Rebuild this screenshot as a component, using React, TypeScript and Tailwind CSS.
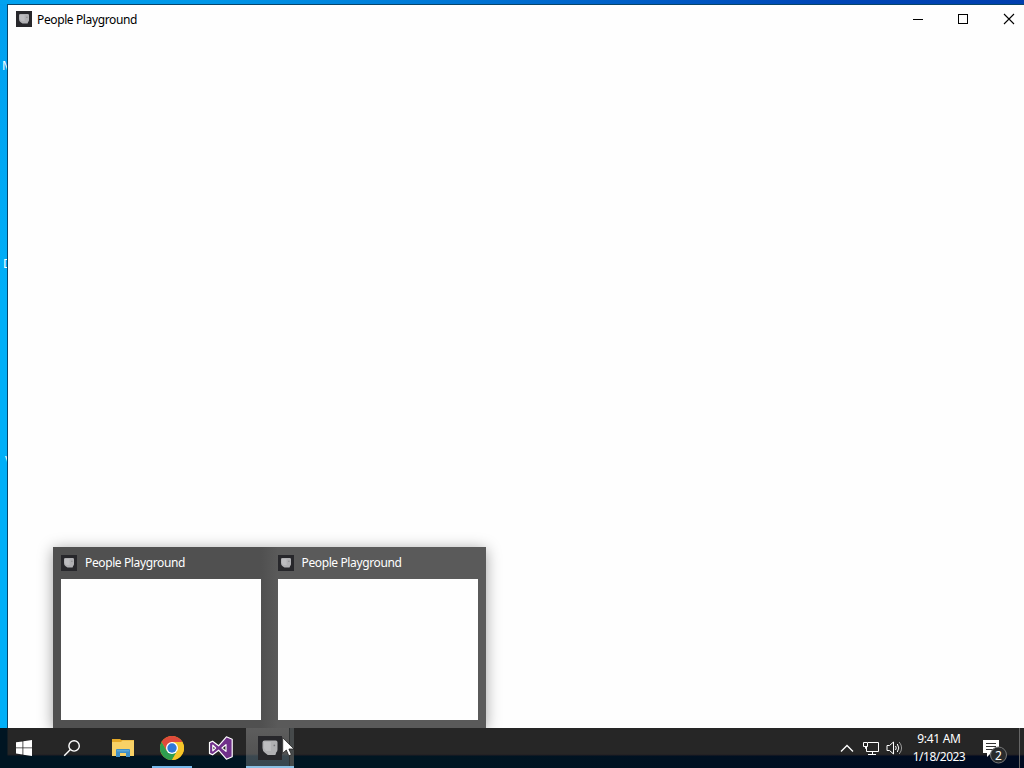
import type { ReactNode } from "react";

type TaskButtonProps = {
  children: ReactNode;
  label: string;
  className?: string;
};

function GameIcon({ size = 16, className = "" }: { size?: number; className?: string }) {
  return (
    <svg width={size} height={size} viewBox="0 0 16 16" className={`shrink-0 ${className}`}>
      <rect width="16" height="16" fill="#27272b" />
      <path
        d="M3 4.2Q3 3 4.4 3H11.8Q13 3 13 4.2V9Q13 10.4 12.2 10.8L11.6 12.6H6.5L4.6 11.2Q3 10.2 3 8Z"
        fill="#b0b0b3"
      />
      <path d="M4 4H8.6V10H5.4Q4 9 4 7.5Z" fill="#bdbdc0" />
      <path d="M10.4 5.8H11.4V6.8H10.4Z" fill="#77777b" />
    </svg>
  );
}

function TaskButton({ children, label, className = "" }: TaskButtonProps) {
  return (
    <button
      aria-label={label}
      className={`flex h-10 shrink-0 items-center justify-center ${className}`}
    >
      {children}
    </button>
  );
}

function AppWindow() {
  return (
    <main className="flex min-w-0 flex-1 flex-col border-t border-l border-[#07456b] bg-[#fefefe]">
      <header className="flex h-[29px] items-center pl-2">
        <GameIcon className="mb-px" />
        <span className="ml-[5px] flex-1 pt-px text-[12px] leading-4 tracking-[-0.38px] text-black">
          People Playground
        </span>
        <svg width="46" height="29" viewBox="0 0 46 29" className="-mr-px">
          <path d="M17 14.5H27" stroke="#000" />
        </svg>
        <svg width="46" height="29" viewBox="0 0 46 29">
          <rect x="17.5" y="9.5" width="9" height="9" fill="none" stroke="#000" />
        </svg>
        <svg width="37" height="29" viewBox="0 0 37 29">
          <path d="M17 9L27 19M27 9L17 19" stroke="#000" strokeWidth="1.1" />
        </svg>
      </header>
    </main>
  );
}

function Preview() {
  return (
    <section className="flex w-[217px] flex-col px-2">
      <div className="flex h-8 items-center">
        <GameIcon />
        <span className="ml-2 text-[12px] leading-4 tracking-[-0.38px] text-white">
          People Playground
        </span>
      </div>
      <div className="h-[141px] w-[200px] bg-[#fefefe]" />
    </section>
  );
}

function Taskbar() {
  return (
    <footer className="relative z-10 flex h-10 bg-[linear-gradient(90deg,#001522_0px,#001522_7px,transparent_8px),linear-gradient(180deg,#262626_0px,#262626_26px,#211d22_27px,transparent_28px),linear-gradient(90deg,#001522_0%,#001622_40%,#000a20_100%)] text-white">
      <TaskButton label="Start" className="w-12">
        <svg width="16" height="16" viewBox="0 0 16 16" fill="#fff">
          <path d="M0 2.3L6.5 1.4V7.5H0ZM7.3 1.2L16 0V7.5H7.3ZM0 8.3H6.5V14.5L0 13.6ZM7.3 8.3H16V16L7.3 14.8Z" />
        </svg>
      </TaskButton>
      <TaskButton label="Search" className="w-12">
        <svg width="18" height="18" viewBox="0 0 18 18" fill="none" stroke="#fff" strokeWidth="1.4">
          <circle cx="11.1" cy="6.9" r="5.2" />
          <path d="M7.4 10.6L1.2 16.8" />
        </svg>
      </TaskButton>
      <TaskButton label="File Explorer" className="w-[53px]">
        <svg width="22" height="18" viewBox="0 0 22 18">
          <path d="M0 0H8L9.5 1H22V17H0Z" fill="#e5a928" />
          <path d="M0 3H9L10.5 1.5H22V17H0Z" fill="#f8d166" />
          <path d="M4 18V11Q4 10 5 10H17Q18 10 18 11V18H14V14H8V18Z" fill="#3f8fc6" />
          <path d="M5 11H17V12.5H5Z" fill="#5ba7d8" />
        </svg>
      </TaskButton>
      <TaskButton label="Chrome" className="ml-[3px] w-10 border-b-2 border-[#76b9ed] pt-0.5">
        <svg width="24" height="24" viewBox="0 0 24 24">
          <circle cx="12" cy="12" r="12" fill="#fbbc05" />
          <path d="M1.6 6A12 12 0 0 1 22.4 6H12L6.8 15Z" fill="#df4a3c" />
          <path d="M1.6 6A12 12 0 0 0 12 24L17.2 15L12 12L6.8 15Z" fill="#2f9e50" />
          <path d="M12 6H22.4A12 12 0 0 1 12 24L17.2 15Z" fill="#f6c52a" />
          <circle cx="12" cy="12" r="6" fill="#fff" />
          <circle cx="12" cy="12" r="4.7" fill="#2f78d8" />
        </svg>
      </TaskButton>
      <TaskButton label="Visual Studio" className="ml-1 w-[50px]">
        <svg width="26" height="26" viewBox="0 0 26 26">
          <path
            d="M1.5 7.6L4.6 6.2L10.6 10.8L18.4 1.8L24.2 4.2V21.8L18.4 24.2L10.6 15.2L4.6 19.8L1.5 18.4ZM4.8 10.2V15.8L7.6 13ZM18 9.6L14 13L18 16.4Z"
            fill="#70308a"
            fillRule="evenodd"
            stroke="#fff"
            strokeWidth="1.2"
            strokeLinejoin="round"
          />
        </svg>
      </TaskButton>
      <TaskButton
        label="People Playground"
        className="w-12 border-b-2 border-[#8ac0e4] bg-[linear-gradient(90deg,transparent_43px,#303334_43px,#303334_44px,#464a4b_44px),linear-gradient(180deg,#5d5d5d_0px,#535353_26px,#3b4850_28px,#37464e_40px)] pt-0.5"
      >
        <GameIcon size={24} />
      </TaskButton>

      <div className="ml-auto flex h-10">
        <div className="flex items-center">
          <svg width="14" height="9" viewBox="0 0 14 9" fill="none" stroke="#fff" strokeWidth="1.3" className="mr-2">
            <path d="M1 7.5L7 1.5L13 7.5" />
          </svg>
          <svg width="18" height="16" viewBox="0 0 18 16" fill="none" stroke="#fff" className="mr-1.5">
            <path d="M6 2.5H16.5V11.5H4.5V6.5M10.5 11.5V14.5M6 14.5H14" />
            <path d="M1.5 2.5H5.5V6.5H1.5ZM3.5 6.5V8.5H5" />
          </svg>
          <svg width="17" height="14" viewBox="0 0 17 14" fill="none" stroke="#fff" strokeWidth="1">
            <path d="M1 4.5H3.5L7.5 1V13L3.5 9.5H1Z" />
            <path d="M9.5 5Q11 7 9.5 9M11.3 3Q14.3 7 11.3 11" />
            <path d="M13.2 1Q18 7 13.2 13" stroke="#999" />
          </svg>
        </div>
        <div className="ml-[7px] flex w-[58px] flex-col items-center pt-0.5 text-center text-[12px] leading-[18px] whitespace-nowrap">
          <span className="tracking-[-0.3px]">9:41 AM</span>
          <span className="tracking-[-0.5px]">1/18/2023</span>
        </div>
        <svg width="25" height="26" viewBox="0 0 25 26" className="mt-2.5 ml-[15px]">
          <path d="M0 2H16V15H8L4 19V15H0Z" fill="#fff" />
          <path d="M3 5.5H13M3 8.5H13M3 11.5H10" stroke="#333" />
          <circle cx="15.5" cy="17" r="8" fill="#292b2d" stroke="#777" />
          <text x="15.5" y="21.5" textAnchor="middle" fill="#fff" fontSize="12">
            2
          </text>
        </svg>
        <div className="ml-[11px] w-[5px] border-l border-[#666]" />
      </div>
    </footer>
  );
}

export default function App() {
  return (
    <div className="relative flex h-[768px] w-[1024px] flex-col overflow-hidden font-['Noto_Sans','Open_Sans',sans-serif]">
      <div className="flex flex-1 bg-[linear-gradient(90deg,#00a2ef_0%,#0097e8_20%,#0067cc_55%,#0047b7_80%,#003fae_100%)] pt-1">
        <aside className="flex w-[7px] shrink-0 flex-col overflow-hidden bg-[linear-gradient(180deg,#009fef_0%,#00aff8_40%,#00aff8_100%)] text-[12px] leading-4 whitespace-nowrap text-white">
          <span className="mt-[54px] ml-[2px]">M</span>
          <span className="mt-[182px] ml-[3px]">D</span>
          <span className="mt-[181px] ml-[5px]">V</span>
        </aside>
        <AppWindow />
      </div>

      <div className="absolute top-[547px] left-[53px] flex h-[181px] w-[433px] bg-[linear-gradient(90deg,#505050_0px,#505050_208px,#5a5a5a_225px,#5a5a5a_433px)] shadow-[0_2px_14px_0_rgba(0,0,0,0.38)]">
        <Preview />
        <Preview />
      </div>

      <Taskbar />

      <svg width="14" height="21" viewBox="0 0 14 21" className="absolute top-[737px] left-[282px] z-20">
        <path
          d="M.7 .8V16.3L4.3 13L6.8 18.8L9.4 17.6L6.9 12H12Z"
          fill="#fff"
          stroke="#222"
          strokeWidth=".8"
        />
      </svg>
    </div>
  );
}
